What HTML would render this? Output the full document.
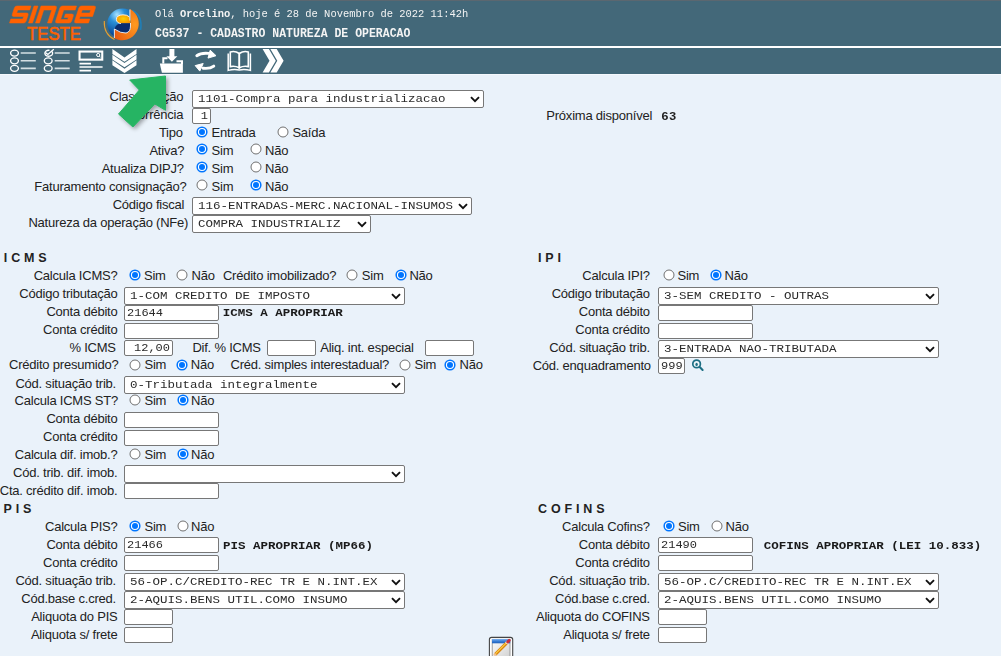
<!DOCTYPE html>
<html><head><meta charset="utf-8"><style>
html,body{margin:0;padding:0}
body{width:1001px;height:656px;overflow:hidden;background:#eaf2fa;position:relative;font-family:'Liberation Sans', sans-serif;color:#222}
.t{position:absolute;font-family:'Liberation Sans', sans-serif;font-size:13px;letter-spacing:-0.22px;line-height:16px;white-space:pre;color:#222}
.m{position:absolute;font-family:'Liberation Mono', monospace;font-size:12.5px;line-height:16px;white-space:pre;color:#1a1a1a;transform:scaleY(0.86);transform-origin:0 12px}
.b{font-weight:bold}
.hd{position:absolute;font-family:'Liberation Mono', monospace;line-height:14px;white-space:pre;color:#f4f4f4}
.hh{position:absolute;font-family:'Liberation Sans', sans-serif;font-weight:bold;font-size:12.5px;line-height:16px;letter-spacing:3.85px;white-space:pre;color:#222}
.sel{position:absolute;box-sizing:border-box;background:#fff;border:1px solid #777;border-radius:2px}
.sel span{position:absolute;left:5px;top:1.3px;font-family:'Liberation Mono', monospace;font-size:12.5px;line-height:15px;white-space:pre;color:#2a2a2a;transform:scaleY(0.9);transform-origin:0 11px}
.chev{position:absolute;right:3px;top:4.5px}
.inp{position:absolute;box-sizing:border-box;background:#fff;border:1px solid #777;border-radius:2px}
.inp span{display:block;padding:0.6px 2px 0;font-family:'Liberation Mono', monospace;font-size:12px;line-height:13px;white-space:pre;color:#2a2a2a;transform:scaleY(0.87);transform-origin:0 11px}
.rad{position:absolute}
</style></head><body>
<div style="position:absolute;left:0;top:0;width:1001px;height:74px;background:#436879"></div>
<div style="position:absolute;left:0;top:0;width:1001px;height:1px;background:#5b6770"></div>
<div style="position:absolute;left:0;top:46px;width:1001px;height:2px;background:#fff"></div>
<div style="position:absolute;left:0;top:74px;width:1001px;height:1px;background:#f5f9fd"></div>
<svg style="position:absolute;left:0;top:0" width="150" height="46" viewBox="0 0 150 46">
<g transform="translate(0,23) skewX(-18)" fill="#ff6100" stroke="#ff6100" stroke-width="0.5" stroke-linejoin="round">
<path d="M11.5 -17 H25.5 V-13 H13.5 V-10 H23.5 Q25.5 -10 25.5 -8 V-2 Q25.5 0 23.5 0 H9.5 V-4 H21.5 V-6.5 H11.5 Q9.5 -6.5 9.5 -8.5 V-15 Q9.5 -17 11.5 -17Z"/>
<path d="M28.5 0 V-17 H32.5 V0Z"/>
<path d="M35.5 0 V-17 H49.5 Q51.5 -17 51.5 -15 V0 H47.5 V-13 H39.5 V0Z"/>
<path d="M57 -17 H71 V-13 H59.5 V-3.5 H66.5 V-5.5 H62.5 V-9 H69 Q71 -9 71 -7 V-2 Q71 0 69 0 H57 Q55 0 55 -2 V-15 Q55 -17 57 -17Z"/>
<path fill-rule="evenodd" d="M76 -17 H88.5 Q90.5 -17 90.5 -15 V-6.5 H78 V-4 H88.5 V0 H76 Q74 0 74 -2 V-15 Q74 -17 76 -17Z M78 -13 V-10 H86.5 V-13Z"/>
</g>
<text x="27" y="40" font-family="Liberation Sans" font-size="18.6" fill="#ff6100" stroke="#ff6100" stroke-width="0.55" textLength="54" lengthAdjust="spacingAndGlyphs">TESTE</text>
<defs>
<radialGradient id="gb" cx="0.32" cy="0.2" r="0.85"><stop offset="0" stop-color="#a8e2ff"/><stop offset="0.3" stop-color="#2a90d8"/><stop offset="0.75" stop-color="#0c4f9c"/><stop offset="1" stop-color="#083470"/></radialGradient>
<radialGradient id="go" cx="0.85" cy="0.5" r="0.9"><stop offset="0" stop-color="#ff9a20"/><stop offset="1" stop-color="#e85a10"/></radialGradient>
<radialGradient id="gy" cx="0.5" cy="0.45" r="0.6"><stop offset="0" stop-color="#ffd000"/><stop offset="1" stop-color="#f59000"/></radialGradient>
</defs>
<path d="M104.3 21 Q103.5 34 114.5 39.5" fill="none" stroke="#e8a030" stroke-width="1.1"/>
<path d="M132.5 10.5 Q143 16 140.5 30" fill="none" stroke="#1f7fb8" stroke-width="1.6"/>
<circle cx="122.5" cy="23.8" r="15.2" fill="url(#gb)"/>
<path d="M129.9 8.9 A15.2 15.2 0 0 1 114.4 38.3 L114.4 29 Q121 33.5 126 33 Q130.5 32 130.5 26 L130.5 20 Z" fill="url(#go)"/>
<path d="M130.3 20 Q130 14.5 123 14.8 Q116.4 15 116.4 19 Q116.4 23.5 122 23.6 L130.4 23.6 Z" fill="url(#gy)"/>
<path d="M130.4 23.3 H121 Q116.5 23.6 114.4 29 Q121 33.5 126 33 Q130.5 32 130.5 26 Z" fill="#0a2d6e"/>
<g fill="none" stroke="#fff" stroke-width="0.9" opacity="0.95">
<path d="M129.9 9.5 V20.5"/>
<path d="M129.5 17 Q127 14.6 123 14.8 Q116.4 15 116.4 19.5 Q116.6 23 121 23.6"/>
<path d="M114.4 38 V29 Q121 33.5 126 33 Q130.5 32 130.5 26 V23"/>
</g>
</svg>
<div class="hd" style="left:155px;top:6.3px;font-size:10.45px;transform-origin:0 0;transform:scaleY(1.1)">Olá <b>Orcelino</b>, hoje é 28 de Novembro de 2022 11:42h</div>
<div class="hd b" style="left:155px;top:25.4px;font-size:11.5px;transform-origin:0 0;transform:scaleY(1.15)">CG537 - CADASTRO NATUREZA DE OPERACAO</div>
<svg style="position:absolute;left:0;top:48px" width="300" height="26" viewBox="0 48 300 26" fill="none" stroke="#fff">
<g stroke-width="1.35">
<ellipse cx="14.5" cy="53.1" rx="3.9" ry="3.0"/><ellipse cx="14.5" cy="60.8" rx="3.9" ry="3.0"/><ellipse cx="14.5" cy="68.3" rx="3.9" ry="3.0"/>
<path d="M51.6 51.2 A3.9 3 0 1 1 49.5 50.3"/><ellipse cx="48.2" cy="60.8" rx="3.9" ry="3.0"/><ellipse cx="48.2" cy="68.3" rx="3.9" ry="3.0"/>
</g>
<path d="M45.4 52.4 L47.9 54.5 L53.8 49.3" stroke-width="1.3"/>
<g stroke-width="1.6" stroke="#d5dfe3"><path d="M20.7 53H35.8M20.7 60.8H35.8M20.7 68.4H35.8M54.7 53H69.7M54.7 60.8H69.7M54.7 68.4H69.7"/></g>
<rect x="79.55" y="51.55" width="22.7" height="8.1" stroke-width="2.1"/>
<circle cx="98.2" cy="55" r="1.6" stroke-width="1"/><path d="M99.3 56.1 L100.6 57.4" stroke-width="1"/>
<g stroke-width="1.7"><path d="M79.5 63.6H91M79.5 67H102.6M79.5 70.6H91"/></g>
<g fill="#fff" stroke="none">
<path d="M112.4 49.1 L124.5 57.5 L136.5 49.1 V54 L124.5 61.7 L112.4 54Z"/>
<path d="M112.4 54.7 L124.5 63.1 L136.5 54.7 V59.6 L124.5 67.3 L112.4 59.6Z"/>
<path d="M112.4 60.3 L124.5 68.7 L136.5 60.3 V65.2 L124.5 72.9 L112.4 65.2Z"/>
</g>
<g fill="#fff" stroke="none">
<path d="M169.4 49 H174.4 V56.3 H177.4 L171.9 61.8 L166.4 56.3 H169.4Z"/>
<path d="M159.8 63.4 H182.9 V72.8 H161.9Z"/>
</g>
<path d="M163.3 63.4 V58.2 H167.5 M176.5 61.2 H182 V64" stroke-width="2"/>
<g stroke-width="2.9" stroke-linecap="round">
<path d="M196.8 55.7 Q201 52.7 208.5 53.4"/>
<path d="M213.8 66.1 Q210 69 203 68.2"/>
</g>
<g fill="#fff" stroke="#fff" stroke-width="1" stroke-linejoin="round">
<path d="M210.2 50.2 L216 55.7 L208 58.1Z"/>
<path d="M195.2 65.6 L203.2 63.5 L199.8 71.1Z"/>
</g>
<g stroke-width="1.6">
<path d="M230.3 52 Q235 50.6 239.3 53.5 V67.8 Q235 65.6 230.3 66.6Z"/>
<path d="M248.3 52 Q243.6 50.6 239.3 53.5 V67.8 Q243.6 65.6 248.3 66.6Z"/>
<path d="M228.2 53.5 V70.4 Q234 68.8 239.3 70 Q244.6 68.8 250.4 70.4 V53.5" stroke-width="1.5"/>
</g>
<g fill="#fff" stroke="none">
<path d="M262.6 49.1 H268.9 L275.8 60.8 L268.9 72.5 H262.6 L269.5 60.8Z"/>
<path d="M270.4 49.1 H276.7 L283.6 60.8 L276.7 72.5 H270.4 L277.3 60.8Z"/>
</g>
</svg>
<div class="t" style="right:817.80px;top:89.00px;text-align:right">Classificação</div>
<div class="sel" style="left:192px;top:90px;width:292px;height:18px"><span>1101-Compra para industrializacao</span><svg class="chev" width="10" height="7" viewBox="0 0 10 7"><path d="M1 1.2 L5 5.2 L9 1.2" fill="none" stroke="#111" stroke-width="1.9"/></svg></div>
<div class="t" style="right:817.70px;top:107.00px;text-align:right">Ocorrência</div>
<div class="inp" style="left:192px;top:108px;width:19px;height:16px;text-align:right"><span>1</span></div>
<div class="t" style="right:818.20px;top:124.90px;text-align:right">Tipo</div>
<svg class="rad" style="left:196.30px;top:125.50px" width="12" height="12" viewBox="0 0 12 12"><circle cx="6" cy="6" r="4.85" fill="#fff" stroke="#0075ff" stroke-width="1.5"/><circle cx="6" cy="6" r="3" fill="#0075ff"/></svg>
<div class="t" style="left:211.60px;top:124.90px">Entrada</div>
<svg class="rad" style="left:277.40px;top:125.50px" width="12" height="12" viewBox="0 0 12 12"><circle cx="6" cy="6" r="5" fill="#fff" stroke="#707070" stroke-width="1"/></svg>
<div class="t" style="left:292.40px;top:124.90px">Saída</div>
<div class="t" style="right:816.80px;top:142.90px;text-align:right">Ativa?</div>
<svg class="rad" style="left:196.30px;top:143.40px" width="12" height="12" viewBox="0 0 12 12"><circle cx="6" cy="6" r="4.85" fill="#fff" stroke="#0075ff" stroke-width="1.5"/><circle cx="6" cy="6" r="3" fill="#0075ff"/></svg>
<div class="t" style="left:211.60px;top:142.90px">Sim</div>
<svg class="rad" style="left:250.00px;top:143.40px" width="12" height="12" viewBox="0 0 12 12"><circle cx="6" cy="6" r="5" fill="#fff" stroke="#707070" stroke-width="1"/></svg>
<div class="t" style="left:265.00px;top:142.90px">Não</div>
<div class="t" style="right:817.20px;top:160.90px;text-align:right">Atualiza DIPJ?</div>
<svg class="rad" style="left:196.30px;top:161.40px" width="12" height="12" viewBox="0 0 12 12"><circle cx="6" cy="6" r="4.85" fill="#fff" stroke="#0075ff" stroke-width="1.5"/><circle cx="6" cy="6" r="3" fill="#0075ff"/></svg>
<div class="t" style="left:211.60px;top:160.90px">Sim</div>
<svg class="rad" style="left:250.00px;top:161.40px" width="12" height="12" viewBox="0 0 12 12"><circle cx="6" cy="6" r="5" fill="#fff" stroke="#707070" stroke-width="1"/></svg>
<div class="t" style="left:265.00px;top:160.90px">Não</div>
<div class="t" style="right:814.40px;top:178.90px;text-align:right">Faturamento consignação?</div>
<svg class="rad" style="left:196.30px;top:179.40px" width="12" height="12" viewBox="0 0 12 12"><circle cx="6" cy="6" r="5" fill="#fff" stroke="#707070" stroke-width="1"/></svg>
<div class="t" style="left:211.60px;top:178.90px">Sim</div>
<svg class="rad" style="left:250.00px;top:179.40px" width="12" height="12" viewBox="0 0 12 12"><circle cx="6" cy="6" r="4.85" fill="#fff" stroke="#0075ff" stroke-width="1.5"/><circle cx="6" cy="6" r="3" fill="#0075ff"/></svg>
<div class="t" style="left:265.00px;top:178.90px">Não</div>
<div class="t" style="right:816.80px;top:196.90px;text-align:right">Código fiscal</div>
<div class="sel" style="left:192px;top:197px;width:280px;height:18px"><span>116-ENTRADAS-MERC.NACIONAL-INSUMOS</span><svg class="chev" width="10" height="7" viewBox="0 0 10 7"><path d="M1 1.2 L5 5.2 L9 1.2" fill="none" stroke="#111" stroke-width="1.9"/></svg></div>
<div class="t" style="right:812.80px;top:215.00px;text-align:right">Natureza da operação (NFe)</div>
<div class="sel" style="left:192px;top:215px;width:179px;height:18px"><span>COMPRA INDUSTRIALIZ</span><svg class="chev" width="10" height="7" viewBox="0 0 10 7"><path d="M1 1.2 L5 5.2 L9 1.2" fill="none" stroke="#111" stroke-width="1.9"/></svg></div>
<div class="t" style="left:546.30px;top:107.50px">Próxima disponível</div>
<div class="t" style="left:661.4px;top:108.4px;font-size:12.4px;font-weight:bold;letter-spacing:0.9px;transform:scaleY(0.9);transform-origin:0 12px">63</div>
<div class="hh" style="left:3.85px;top:250.4px">ICMS</div>
<div class="hh" style="left:537.9px;top:250.4px">IPI</div>
<div class="hh" style="left:3.6px;top:500.69999999999993px">PIS</div>
<div class="hh" style="left:538.1px;top:500.69999999999993px">COFINS</div>
<div class="t" style="right:883.50px;top:268.00px;text-align:right">Calcula ICMS?</div>
<svg class="rad" style="left:128.50px;top:268.70px" width="12" height="12" viewBox="0 0 12 12"><circle cx="6" cy="6" r="4.85" fill="#fff" stroke="#0075ff" stroke-width="1.5"/><circle cx="6" cy="6" r="3" fill="#0075ff"/></svg>
<div class="t" style="left:144.00px;top:268.00px">Sim</div>
<svg class="rad" style="left:176.40px;top:268.70px" width="12" height="12" viewBox="0 0 12 12"><circle cx="6" cy="6" r="5" fill="#fff" stroke="#707070" stroke-width="1"/></svg>
<div class="t" style="left:191.60px;top:268.00px">Não</div>
<div class="t" style="left:222.90px;top:268.00px">Crédito imobilizado?</div>
<svg class="rad" style="left:346.20px;top:268.70px" width="12" height="12" viewBox="0 0 12 12"><circle cx="6" cy="6" r="5" fill="#fff" stroke="#707070" stroke-width="1"/></svg>
<div class="t" style="left:361.80px;top:268.00px">Sim</div>
<svg class="rad" style="left:394.80px;top:268.70px" width="12" height="12" viewBox="0 0 12 12"><circle cx="6" cy="6" r="4.85" fill="#fff" stroke="#0075ff" stroke-width="1.5"/><circle cx="6" cy="6" r="3" fill="#0075ff"/></svg>
<div class="t" style="left:409.40px;top:268.00px">Não</div>
<div class="t" style="right:883.50px;top:286.20px;text-align:right">Código tributação</div>
<div class="sel" style="left:124px;top:287px;width:281px;height:18px"><span>1-COM CREDITO DE IMPOSTO</span><svg class="chev" width="10" height="7" viewBox="0 0 10 7"><path d="M1 1.2 L5 5.2 L9 1.2" fill="none" stroke="#111" stroke-width="1.9"/></svg></div>
<div class="t" style="right:883.50px;top:304.00px;text-align:right">Conta débito</div>
<div class="inp" style="left:124px;top:305px;width:95px;height:16px;text-align:left"><span>21644</span></div>
<div class="m b" style="left:222.80px;top:304.90px;font-size:12.5px">ICMS A APROPRIAR</div>
<div class="t" style="right:883.50px;top:321.80px;text-align:right">Conta crédito</div>
<div class="inp" style="left:124px;top:323px;width:95px;height:16px;text-align:left"><span></span></div>
<div class="t" style="right:885.20px;top:339.70px;text-align:right">% ICMS</div>
<div class="inp" style="left:124px;top:340px;width:49px;height:16px;text-align:right"><span>12,00</span></div>
<div class="t" style="left:192.40px;top:339.70px">Dif. % ICMS</div>
<div class="inp" style="left:267px;top:340px;width:49px;height:16px;text-align:left"><span></span></div>
<div class="t" style="left:320.20px;top:339.70px">Aliq. int. especial</div>
<div class="inp" style="left:425px;top:340px;width:49px;height:16px;text-align:left"><span></span></div>
<div class="t" style="right:882.50px;top:357.10px;text-align:right">Crédito presumido?</div>
<svg class="rad" style="left:129.00px;top:358.50px" width="12" height="12" viewBox="0 0 12 12"><circle cx="6" cy="6" r="5" fill="#fff" stroke="#707070" stroke-width="1"/></svg>
<div class="t" style="left:144.50px;top:357.10px">Sim</div>
<svg class="rad" style="left:176.20px;top:358.50px" width="12" height="12" viewBox="0 0 12 12"><circle cx="6" cy="6" r="4.85" fill="#fff" stroke="#0075ff" stroke-width="1.5"/><circle cx="6" cy="6" r="3" fill="#0075ff"/></svg>
<div class="t" style="left:190.80px;top:357.10px">Não</div>
<div class="t" style="left:230.50px;top:357.10px">Créd. simples interestadual?</div>
<svg class="rad" style="left:399.30px;top:358.50px" width="12" height="12" viewBox="0 0 12 12"><circle cx="6" cy="6" r="5" fill="#fff" stroke="#707070" stroke-width="1"/></svg>
<div class="t" style="left:414.50px;top:357.10px">Sim</div>
<svg class="rad" style="left:444.30px;top:358.50px" width="12" height="12" viewBox="0 0 12 12"><circle cx="6" cy="6" r="4.85" fill="#fff" stroke="#0075ff" stroke-width="1.5"/><circle cx="6" cy="6" r="3" fill="#0075ff"/></svg>
<div class="t" style="left:459.50px;top:357.10px">Não</div>
<div class="t" style="right:885.00px;top:375.50px;text-align:right">Cód. situação trib.</div>
<div class="sel" style="left:124px;top:376px;width:281px;height:18px"><span>0-Tributada integralmente</span><svg class="chev" width="10" height="7" viewBox="0 0 10 7"><path d="M1 1.2 L5 5.2 L9 1.2" fill="none" stroke="#111" stroke-width="1.9"/></svg></div>
<div class="t" style="right:883.00px;top:393.00px;text-align:right">Calcula ICMS ST?</div>
<svg class="rad" style="left:129.00px;top:394.30px" width="12" height="12" viewBox="0 0 12 12"><circle cx="6" cy="6" r="5" fill="#fff" stroke="#707070" stroke-width="1"/></svg>
<div class="t" style="left:144.50px;top:393.00px">Sim</div>
<svg class="rad" style="left:176.50px;top:394.30px" width="12" height="12" viewBox="0 0 12 12"><circle cx="6" cy="6" r="4.85" fill="#fff" stroke="#0075ff" stroke-width="1.5"/><circle cx="6" cy="6" r="3" fill="#0075ff"/></svg>
<div class="t" style="left:191.00px;top:393.00px">Não</div>
<div class="t" style="right:883.50px;top:411.10px;text-align:right">Conta débito</div>
<div class="inp" style="left:124px;top:412px;width:95px;height:16px;text-align:left"><span></span></div>
<div class="t" style="right:883.50px;top:428.90px;text-align:right">Conta crédito</div>
<div class="inp" style="left:124px;top:430px;width:95px;height:16px;text-align:left"><span></span></div>
<div class="t" style="right:883.50px;top:446.70px;text-align:right">Calcula dif. imob.?</div>
<svg class="rad" style="left:129.00px;top:447.80px" width="12" height="12" viewBox="0 0 12 12"><circle cx="6" cy="6" r="5" fill="#fff" stroke="#707070" stroke-width="1"/></svg>
<div class="t" style="left:144.50px;top:446.70px">Sim</div>
<svg class="rad" style="left:176.50px;top:447.80px" width="12" height="12" viewBox="0 0 12 12"><circle cx="6" cy="6" r="4.85" fill="#fff" stroke="#0075ff" stroke-width="1.5"/><circle cx="6" cy="6" r="3" fill="#0075ff"/></svg>
<div class="t" style="left:191.00px;top:446.70px">Não</div>
<div class="t" style="right:883.50px;top:464.80px;text-align:right">Cód. trib. dif. imob.</div>
<div class="sel" style="left:124px;top:465px;width:281px;height:18px"><span></span><svg class="chev" width="10" height="7" viewBox="0 0 10 7"><path d="M1 1.2 L5 5.2 L9 1.2" fill="none" stroke="#111" stroke-width="1.9"/></svg></div>
<div class="t" style="right:883.50px;top:482.80px;text-align:right">Cta. crédito dif. imob.</div>
<div class="inp" style="left:124px;top:483px;width:95px;height:16px;text-align:left"><span></span></div>
<div class="t" style="right:883.50px;top:519.30px;text-align:right">Calcula PIS?</div>
<svg class="rad" style="left:129.00px;top:519.50px" width="12" height="12" viewBox="0 0 12 12"><circle cx="6" cy="6" r="4.85" fill="#fff" stroke="#0075ff" stroke-width="1.5"/><circle cx="6" cy="6" r="3" fill="#0075ff"/></svg>
<div class="t" style="left:144.50px;top:519.30px">Sim</div>
<svg class="rad" style="left:176.50px;top:519.50px" width="12" height="12" viewBox="0 0 12 12"><circle cx="6" cy="6" r="5" fill="#fff" stroke="#707070" stroke-width="1"/></svg>
<div class="t" style="left:191.00px;top:519.30px">Não</div>
<div class="t" style="right:883.50px;top:536.80px;text-align:right">Conta débito</div>
<div class="inp" style="left:124px;top:537px;width:95px;height:16px;text-align:left"><span>21466</span></div>
<div class="m b" style="left:223.00px;top:537.60px;font-size:12.5px">PIS APROPRIAR (MP66)</div>
<div class="t" style="right:883.50px;top:554.80px;text-align:right">Conta crédito</div>
<div class="inp" style="left:124px;top:555px;width:95px;height:16px;text-align:left"><span></span></div>
<div class="t" style="right:885.00px;top:572.80px;text-align:right">Cód. situação trib.</div>
<div class="sel" style="left:124px;top:573px;width:281px;height:18px"><span>56-OP.C/CREDITO-REC TR E N.INT.EX</span><svg class="chev" width="10" height="7" viewBox="0 0 10 7"><path d="M1 1.2 L5 5.2 L9 1.2" fill="none" stroke="#111" stroke-width="1.9"/></svg></div>
<div class="t" style="right:885.00px;top:591.00px;text-align:right">Cód.base c.cred.</div>
<div class="sel" style="left:124px;top:591px;width:281px;height:18px"><span>2-AQUIS.BENS UTIL.COMO INSUMO</span><svg class="chev" width="10" height="7" viewBox="0 0 10 7"><path d="M1 1.2 L5 5.2 L9 1.2" fill="none" stroke="#111" stroke-width="1.9"/></svg></div>
<div class="t" style="right:883.50px;top:608.50px;text-align:right">Aliquota do PIS</div>
<div class="inp" style="left:124px;top:609px;width:49px;height:16px;text-align:left"><span></span></div>
<div class="t" style="right:883.50px;top:626.50px;text-align:right">Aliquota s/ frete</div>
<div class="inp" style="left:124px;top:627px;width:49px;height:16px;text-align:left"><span></span></div>
<div class="t" style="right:351.20px;top:267.80px;text-align:right">Calcula IPI?</div>
<svg class="rad" style="left:662.70px;top:269.00px" width="12" height="12" viewBox="0 0 12 12"><circle cx="6" cy="6" r="5" fill="#fff" stroke="#707070" stroke-width="1"/></svg>
<div class="t" style="left:677.50px;top:267.80px">Sim</div>
<svg class="rad" style="left:710.30px;top:269.00px" width="12" height="12" viewBox="0 0 12 12"><circle cx="6" cy="6" r="4.85" fill="#fff" stroke="#0075ff" stroke-width="1.5"/><circle cx="6" cy="6" r="3" fill="#0075ff"/></svg>
<div class="t" style="left:724.50px;top:267.80px">Não</div>
<div class="t" style="right:351.20px;top:286.00px;text-align:right">Código tributação</div>
<div class="sel" style="left:658px;top:287px;width:281px;height:18px"><span>3-SEM CREDITO - OUTRAS</span><svg class="chev" width="10" height="7" viewBox="0 0 10 7"><path d="M1 1.2 L5 5.2 L9 1.2" fill="none" stroke="#111" stroke-width="1.9"/></svg></div>
<div class="t" style="right:351.20px;top:304.00px;text-align:right">Conta débito</div>
<div class="inp" style="left:658px;top:305px;width:95px;height:16px;text-align:left"><span></span></div>
<div class="t" style="right:351.20px;top:322.00px;text-align:right">Conta crédito</div>
<div class="inp" style="left:658px;top:323px;width:95px;height:16px;text-align:left"><span></span></div>
<div class="t" style="right:351.20px;top:340.00px;text-align:right">Cód. situação trib.</div>
<div class="sel" style="left:658px;top:340px;width:281px;height:18px"><span>3-ENTRADA NAO-TRIBUTADA</span><svg class="chev" width="10" height="7" viewBox="0 0 10 7"><path d="M1 1.2 L5 5.2 L9 1.2" fill="none" stroke="#111" stroke-width="1.9"/></svg></div>
<div class="t" style="right:350.20px;top:357.80px;text-align:right">Cód. enquadramento</div>
<div class="inp" style="left:658px;top:358px;width:27px;height:16px;text-align:left"><span>999</span></div>
<svg style="position:absolute;left:691px;top:359px" width="14" height="13" viewBox="0 0 14 13">
<circle cx="5.6" cy="4.9" r="3.8" fill="#eef5f8" stroke="#1d6f84" stroke-width="1.7"/>
<ellipse cx="5.6" cy="5.4" rx="1.2" ry="1.7" fill="#1d6f84"/>
<path d="M8.7 8.1 L11.6 10.9" stroke="#1d6f84" stroke-width="2.1" stroke-linecap="round"/>
</svg>
<div class="t" style="right:351.20px;top:519.30px;text-align:right">Calcula Cofins?</div>
<svg class="rad" style="left:662.70px;top:519.50px" width="12" height="12" viewBox="0 0 12 12"><circle cx="6" cy="6" r="4.85" fill="#fff" stroke="#0075ff" stroke-width="1.5"/><circle cx="6" cy="6" r="3" fill="#0075ff"/></svg>
<div class="t" style="left:678.00px;top:519.30px">Sim</div>
<svg class="rad" style="left:710.70px;top:519.50px" width="12" height="12" viewBox="0 0 12 12"><circle cx="6" cy="6" r="5" fill="#fff" stroke="#707070" stroke-width="1"/></svg>
<div class="t" style="left:725.50px;top:519.30px">Não</div>
<div class="t" style="right:351.20px;top:536.80px;text-align:right">Conta débito</div>
<div class="inp" style="left:658px;top:537px;width:95px;height:16px;text-align:left"><span>21490</span></div>
<div class="m b" style="left:763.70px;top:537.60px;font-size:12.5px">COFINS APROPRIAR (LEI 10.833)</div>
<div class="t" style="right:351.20px;top:554.80px;text-align:right">Conta crédito</div>
<div class="inp" style="left:658px;top:555px;width:95px;height:16px;text-align:left"><span></span></div>
<div class="t" style="right:351.20px;top:572.80px;text-align:right">Cód. situação trib.</div>
<div class="sel" style="left:658px;top:573px;width:281px;height:18px"><span>56-OP.C/CREDITO-REC TR E N.INT.EX</span><svg class="chev" width="10" height="7" viewBox="0 0 10 7"><path d="M1 1.2 L5 5.2 L9 1.2" fill="none" stroke="#111" stroke-width="1.9"/></svg></div>
<div class="t" style="right:351.20px;top:591.00px;text-align:right">Cód.base c.cred.</div>
<div class="sel" style="left:658px;top:591px;width:281px;height:18px"><span>2-AQUIS.BENS UTIL.COMO INSUMO</span><svg class="chev" width="10" height="7" viewBox="0 0 10 7"><path d="M1 1.2 L5 5.2 L9 1.2" fill="none" stroke="#111" stroke-width="1.9"/></svg></div>
<div class="t" style="right:351.20px;top:608.50px;text-align:right">Aliquota do COFINS</div>
<div class="inp" style="left:658px;top:609px;width:49px;height:16px;text-align:left"><span></span></div>
<div class="t" style="right:351.20px;top:626.50px;text-align:right">Aliquota s/ frete</div>
<div class="inp" style="left:658px;top:627px;width:49px;height:16px;text-align:left"><span></span></div>
<svg style="position:absolute;left:484px;top:632px" width="36" height="24" viewBox="484 632 36 24">
<defs><linearGradient id="eb" x1="0" y1="0" x2="1" y2="1"><stop offset="0" stop-color="#fdfdfd"/><stop offset="1" stop-color="#cfcfcf"/></linearGradient>
<linearGradient id="et" x1="0" y1="0" x2="0" y2="1"><stop offset="0" stop-color="#7fb2ee"/><stop offset="0.5" stop-color="#3a7fd8"/><stop offset="1" stop-color="#1f5fb8"/></linearGradient></defs>
<rect x="489.4" y="637.4" width="23.3" height="24" rx="2.2" fill="#fff" stroke="#454545" stroke-width="1.1"/>
<rect x="492.2" y="639.3" width="17.8" height="20" fill="url(#eb)" stroke="#8a8a8a" stroke-width="0.8"/>
<rect x="492" y="639" width="18.2" height="4.3" fill="url(#et)"/>
<path d="M495.3 654.3 L506.8 642.8" stroke="#d9850c" stroke-width="3.3"/>
<path d="M495.6 653.6 L506.4 642.8" stroke="#ffd24a" stroke-width="1.1"/>
<path d="M506.2 643.4 L507.8 641.8" stroke="#f4f4f4" stroke-width="3"/>
<path d="M507.7 641.9 L509.2 640.4" stroke="#c9303a" stroke-width="2.9" stroke-linecap="round"/>
<path d="M494.2 655.4 L495.8 653.8" stroke="#f0c090" stroke-width="2.6"/>
</svg>
<svg style="position:absolute;left:100px;top:65px" width="90" height="75" viewBox="100 65 90 75">
<defs><filter id="sh" x="-30%" y="-30%" width="160%" height="160%"><feGaussianBlur in="SourceAlpha" stdDeviation="2.2"/><feOffset dx="2" dy="2"/><feComponentTransfer><feFuncA type="linear" slope="0.35"/></feComponentTransfer><feMerge><feMergeNode/><feMergeNode in="SourceGraphic"/></feMerge></filter></defs>
<path filter="url(#sh)" d="M165.5 76 L129.7 80 L139.3 90 L118.5 114 L132.9 127 L154.8 104 L165.5 110.3 Z" fill="#28b463" stroke="#28b463" stroke-width="1" stroke-linejoin="round"/>
</svg>
</body></html>
